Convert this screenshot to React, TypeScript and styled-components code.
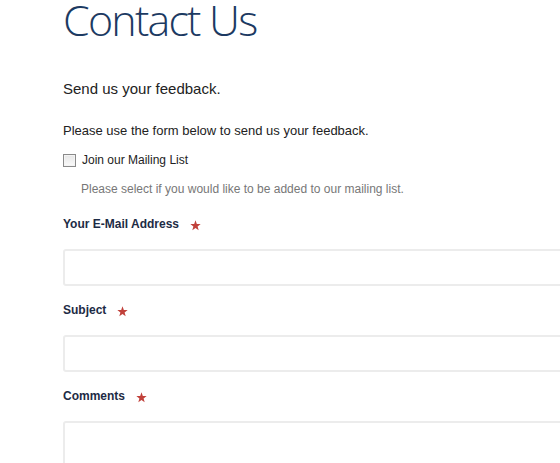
import styled, { createGlobalStyle } from 'styled-components';

const GlobalStyle = createGlobalStyle`
  body {
    margin: 0;
    background: #fff;
    font-family: "Liberation Sans", Arial, sans-serif;
    overflow: hidden;
  }
`;

const Page = styled.div`
  padding: 0 0 0 63px;
  width: 560px;
  box-sizing: border-box;
`;

const Title = styled.h1`
  margin: 0;
  font-family: "Open Sans", "Liberation Sans", sans-serif;
  font-weight: 300;
  font-size: 43px;
  line-height: 40px;
  color: #1c3a62;
  letter-spacing: -1.8px;
`;

const Lead = styled.h2`
  margin: 40px 0 0;
  font-size: 15px;
  font-weight: normal;
  line-height: 18px;
  color: #222;
`;

const Intro = styled.p`
  margin: 25px 0 0;
  font-size: 13px;
  line-height: 16px;
  color: #222;
`;

const CheckRow = styled.label`
  display: flex;
  align-items: center;
  gap: 6px;
  margin-top: 14px;
  font-size: 12px;
  color: #222;
`;

const Box = styled.span`
  width: 11px;
  height: 11px;
  border: 1px solid #8a8a8a;
  background: linear-gradient(#e6e6e6, #fafafa);
  box-shadow: inset 0 0 0 1px #f4f4f4;
`;

const Hint = styled.p`
  margin: 15px 0 0 18px;
  font-size: 12px;
  line-height: 14px;
  color: #777;
`;

const Field = styled.div<{ $top: number }>`
  margin-top: ${p => p.$top}px;
`;

const Label = styled.div`
  display: flex;
  align-items: center;
  gap: 11px;
  font-size: 12px;
  font-weight: bold;
  color: #1d2b45;
  line-height: 14px;
`;

const Star = styled.svg`
  width: 11px;
  height: 11px;
  margin-top: 3px;
  fill: #c1413b;
`;

const Input = styled.div<{ $tall?: boolean }>`
  margin-top: 18px;
  width: 600px;
  height: ${p => (p.$tall ? 80 : 37)}px;
  box-sizing: border-box;
  border: 2px solid #ececec;
  border-radius: 3px;
  background: #fff;
`;

const StarIcon = () => (
  <Star viewBox="0 0 10 10">
    <polygon points="5,0.3 6.2,3.6 9.7,3.7 6.9,5.8 7.9,9.3 5,7.3 2.1,9.3 3.1,5.8 0.3,3.7 3.8,3.6" />
  </Star>
);

export default function App() {
  return (
    <Page>
      <GlobalStyle />
      <Title>Contact Us</Title>
      <Lead>Send us your feedback.</Lead>
      <Intro>Please use the form below to send us your feedback.</Intro>
      <CheckRow>
        <Box />
        Join our Mailing List
      </CheckRow>
      <Hint>Please select if you would like to be added to our mailing list.</Hint>
      <Field $top={21}>
        <Label>Your E-Mail Address <StarIcon /></Label>
        <Input />
      </Field>
      <Field $top={17}>
        <Label>Subject <StarIcon /></Label>
        <Input />
      </Field>
      <Field $top={17}>
        <Label>Comments <StarIcon /></Label>
        <Input $tall />
      </Field>
    </Page>
  );
}
